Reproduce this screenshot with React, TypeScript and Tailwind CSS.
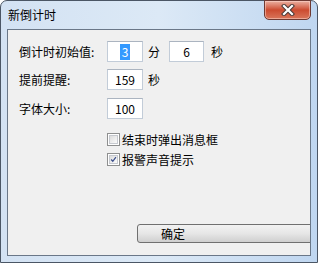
import React from "react";

const font = { fontFamily: '"Noto Sans CJK SC", "Microsoft YaHei", sans-serif' };

function Input({ w, children }: { w: string; children: React.ReactNode }) {
  return (
    <div
      className={`${w} h-[21px] bg-white border border-[#c2ccd8] border-t-[#abb4c0] flex items-center justify-center text-[12px] text-black leading-none`}
    >
      {children}
    </div>
  );
}

function Checkbox({ checked }: { checked?: boolean }) {
  return (
    <div className="w-[13px] h-[13px] border border-[#8e8f8f] bg-white p-[1px]">
      <div className="w-full h-full border border-[#c6c9cf] bg-gradient-to-br from-[#dcdcdc] to-[#fbfbfb] relative">
        {checked && (
          <svg viewBox="0 0 9 9" className="absolute inset-0 w-full h-full">
            <path d="M1.5 4.5 L3.6 6.8 L7.6 1.6" fill="none" stroke="#3b4f8c" strokeWidth="1.6" />
          </svg>
        )}
      </div>
    </div>
  );
}

export default function App() {
  return (
    <div style={font} className="w-[318px] h-[263px] overflow-hidden">
      <div className="relative w-[318px] h-[263px] rounded-t-[7px] border border-[#4b5665] bg-gradient-to-r from-[#d3e2f3] via-[#dce9f6] to-[#bfd6f0] flex flex-col">
        <div className="h-[28px] flex items-center pl-[7px] text-[12px] text-black shrink-0">新倒计时</div>
        <div className="absolute top-[-1px] left-[263px] w-[47px] h-[20px] rounded-b-[5px] border border-[#6e3a33] bg-gradient-to-b from-[#eab0a2] via-[#cc4b30] to-[#d9755a] flex items-center justify-center shadow-[inset_0_0_0_1px_rgba(255,220,210,0.5)]">
          <svg width="14" height="12" viewBox="0 0 14 12">
            <path d="M3 2 L11 10 M11 2 L3 10" stroke="#4a3a38" strokeWidth="4.2" strokeLinecap="square" />
            <path d="M3 2 L11 10 M11 2 L3 10" stroke="#ffffff" strokeWidth="2.2" strokeLinecap="square" />
          </svg>
        </div>
        <div className="mx-[6px] h-[227px] border border-[#6a7788] bg-[#f0f0f0] overflow-hidden shrink-0 text-[12px] text-black leading-none">
          <div className="pt-[11px] flex flex-col">
            <div className="flex items-center h-[21px]">
              <div className="pl-[11px] w-[99px]">倒计时初始值:</div>
              <Input w="w-[36px]">
                <span className="bg-[#3399ff] text-white px-[2px] py-[2px]">3</span>
              </Input>
              <div className="ml-[5px]">分</div>
              <div className="ml-[9px]">
                <Input w="w-[35px]">6</Input>
              </div>
              <div className="ml-[7px]">秒</div>
            </div>
            <div className="flex items-center h-[21px] mt-[7px]">
              <div className="pl-[11px] w-[99px]">提前提醒:</div>
              <Input w="w-[36px]">159</Input>
              <div className="ml-[5px]">秒</div>
            </div>
            <div className="flex items-center h-[21px] mt-[8px]">
              <div className="pl-[11px] w-[99px]">字体大小:</div>
              <Input w="w-[36px]">100</Input>
            </div>
            <div className="flex items-center h-[13px] mt-[14px] pl-[99px]">
              <Checkbox />
              <div className="ml-[2px]">结束时弹出消息框</div>
            </div>
            <div className="flex items-center h-[13px] mt-[7px] pl-[99px]">
              <Checkbox checked />
              <div className="ml-[2px]">报警声音提示</div>
            </div>
            <div className="mt-[58px] ml-[129px] w-[200px] h-[19px] shrink-0 rounded-[3px] border border-[#707070] bg-gradient-to-b from-[#f2f2f2] via-[#e6e6e6] to-[#cfcfcf] flex items-center pl-[23px]">
              确定
            </div>
          </div>
        </div>
      </div>
    </div>
  );
}
